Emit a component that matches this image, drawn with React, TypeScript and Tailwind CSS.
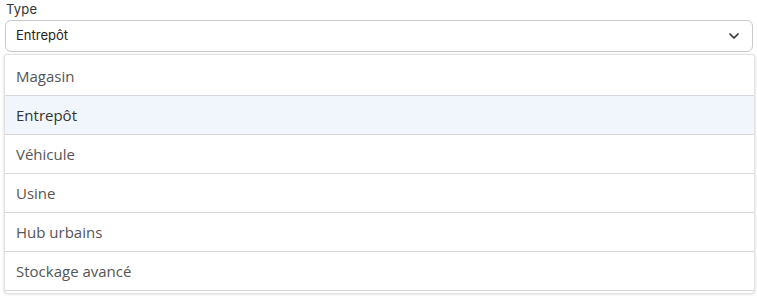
import { ChevronDown } from "lucide-react";

const options = ["Magasin", "Entrepôt", "Véhicule", "Usine", "Hub urbains", "Stockage avancé"];

export default function App() {
  const selected = "Entrepôt";
  return (
    <div className="w-[757px] h-[296px] bg-white relative overflow-hidden" style={{ fontFamily: "Inter, 'Open Sans', sans-serif" }}>
      <div className="pl-[6px] pt-[1px]">
        <div className="text-[13px] leading-[17px] text-[#333] tracking-[0.2px]">Type</div>
      </div>
      <div className="ml-[5px] mt-[2px] w-[748px] h-[32px] border border-[#c9c9c9] rounded-[6px] flex items-center justify-between pl-[10px] pr-[10px]">
        <span className="text-[13px] text-[#222]">{selected}</span>
        <ChevronDown size={16} strokeWidth={2.6} className="text-[#333]" />
      </div>
      <div className="absolute left-[4px] top-[54px] w-[751px] pt-[2px] bg-white border-t border-l border-r border-[#e2e2e2] shadow-[0_1px_3px_rgba(0,0,0,0.18)] rounded-b-[4px] rounded-t-[3px]">
        {options.map((o) => (
          <div
            key={o}
            className={`h-[39px] flex items-center pl-[11px] pt-[1px] border-b border-[#d6d7dd] text-[15px] ${o === selected ? "bg-[#f1f6fc] text-[#333]" : "text-[#555]"}`}
            style={{ fontFamily: "'Open Sans', sans-serif" }}
          >
            {o}
          </div>
        ))}
        <div className="h-[2px]" />
      </div>
    </div>
  );
}
